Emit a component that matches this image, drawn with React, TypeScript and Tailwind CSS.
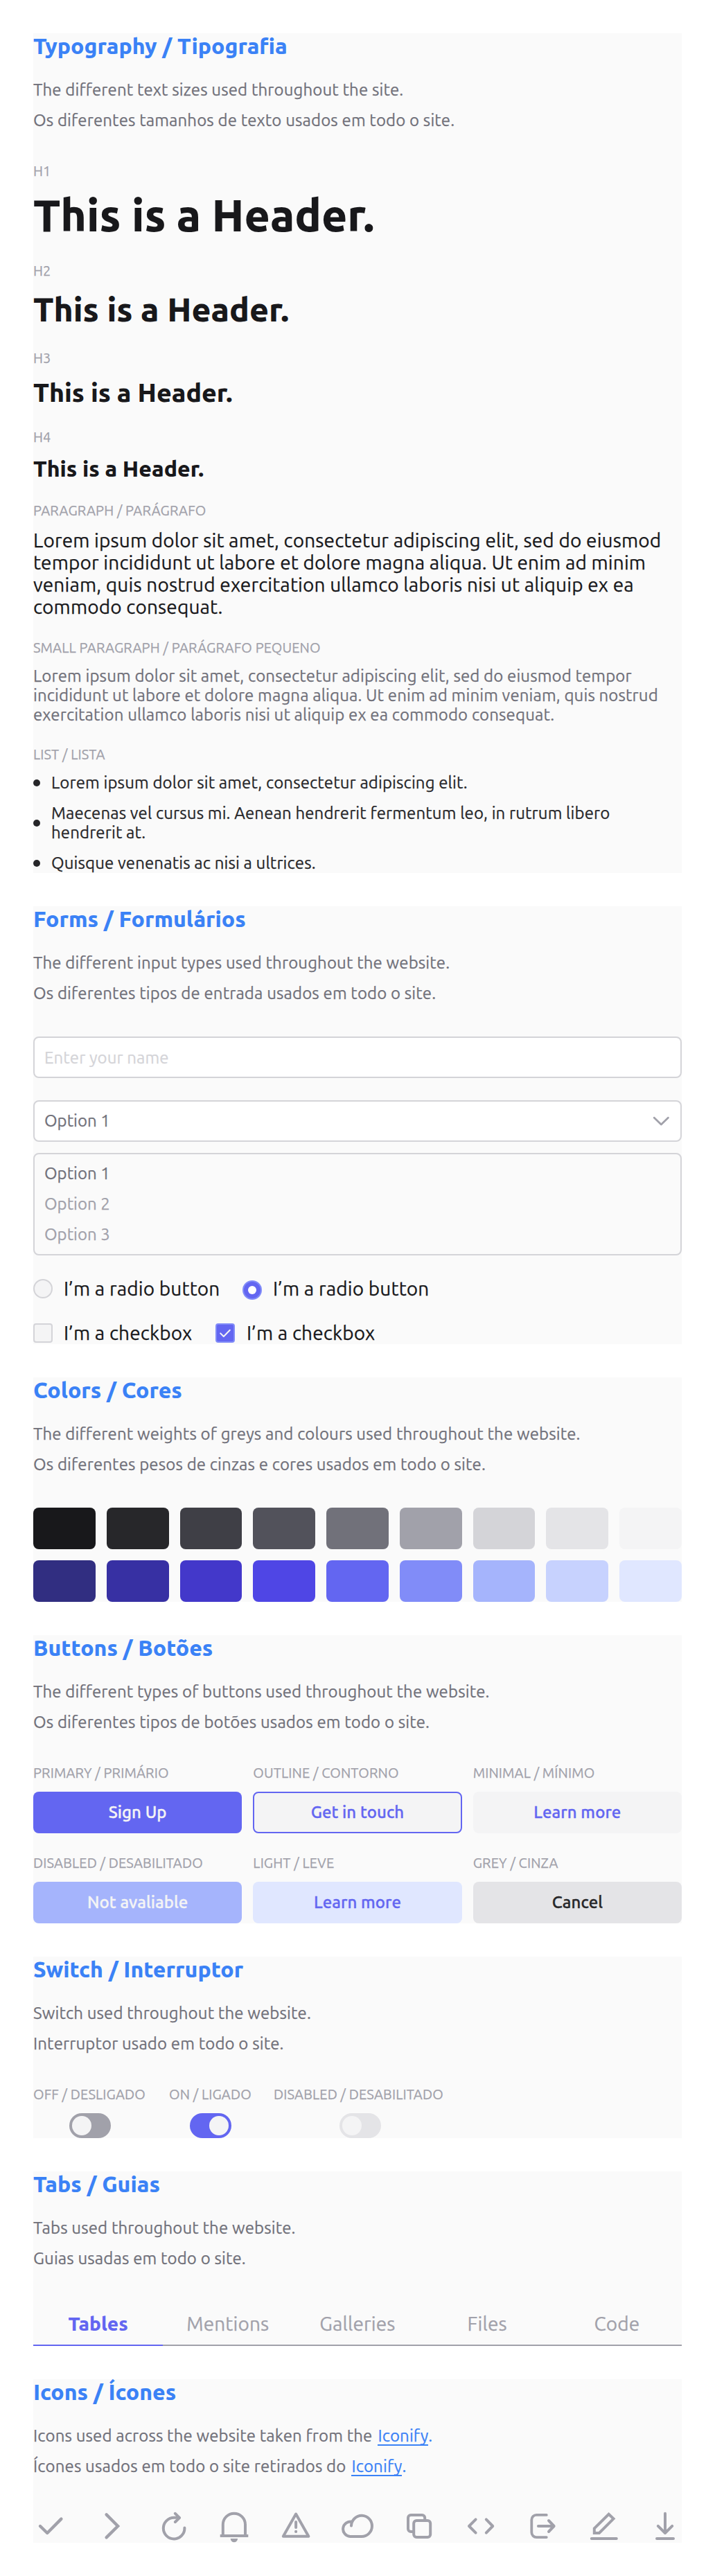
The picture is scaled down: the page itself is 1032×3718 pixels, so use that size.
import type { ReactNode } from "react";

type SectionProps = {
  title: string;
  en: ReactNode;
  pt: ReactNode;
  className: string;
  children: ReactNode;
};

function Section({ title, en, pt, className, children }: SectionProps) {
  return (
    <section className={`flex flex-col bg-[#fafafa] ${className}`}>
      <h2 className="text-[32px] leading-9 font-extrabold tracking-normal text-[#3b82f6] [-webkit-text-stroke:0px]">{title}</h2>
      <div className="mt-8 flex flex-col gap-4 text-2xl leading-7 tracking-[0.0055em] text-[#71717a]">
        <p className="flex">{en}</p>
        <p className="flex">{pt}</p>
      </div>
      {children}
    </section>
  );
}

function Label({ children, className = "" }: { children: ReactNode; className?: string }) {
  return (
    <div className={`text-xl leading-[23px] tracking-[0.006em] whitespace-nowrap text-[#a1a1aa] ${className}`}>{children}</div>
  );
}

function IconifyLink() {
  return (
    <span className="ml-2 flex text-[#3b82f6]">
      <a href="#iconify" className="h-7 border-b-2 border-[#3b82f6] leading-7">
        Iconify
      </a>
      .
    </span>
  );
}

const greys = [
  "bg-[#18181b]",
  "bg-[#27272a]",
  "bg-[#3f3f46]",
  "bg-[#52525b]",
  "bg-[#71717a]",
  "bg-[#a1a1aa]",
  "bg-[#d4d4d8]",
  "bg-[#e4e4e7]",
  "bg-[#f4f4f5]",
];

const indigos = [
  "bg-[#312e81]",
  "bg-[#3730a3]",
  "bg-[#4338ca]",
  "bg-[#4f46e5]",
  "bg-[#6366f1]",
  "bg-[#818cf8]",
  "bg-[#a5b4fc]",
  "bg-[#c7d2fe]",
  "bg-[#e0e7ff]",
];

const buttons = [
  { label: "PRIMARY / PRIMÁRIO", text: "Sign Up", style: "bg-[#6366f1] text-[#f4f4f5]" },
  { label: "OUTLINE / CONTORNO", text: "Get in touch", style: "border-2 border-[#6366f1] bg-[#f4f4f5] text-[#6366f1]" },
  { label: "MINIMAL / MÍNIMO", text: "Learn more", style: "bg-[#f4f4f5] text-[#6366f1]" },
  { label: "DISABLED / DESABILITADO", text: "Not avaliable", style: "bg-[#a5b4fc] text-[#f4f4f5]" },
  { label: "LIGHT / LEVE", text: "Learn more", style: "bg-[#e0e7ff] text-[#6366f1]" },
  { label: "GREY / CINZA", text: "Cancel", style: "bg-[#e4e4e7] text-[#27272a]" },
];

const switches = [
  { label: "OFF / DESLIGADO", width: "w-[164px]", style: "justify-start bg-[#a1a1aa]" },
  { label: "ON / LIGADO", width: "w-[119px]", style: "justify-end bg-[#6366f1]" },
  { label: "DISABLED / DESABILITADO", width: "w-[249px]", style: "justify-start bg-[#e4e4e7]" },
];

const bullets = [
  "Lorem ipsum dolor sit amet, consectetur adipiscing elit.",
  "Maecenas vel cursus mi. Aenean hendrerit fermentum leo, in rutrum libero hendrerit at.",
  "Quisque venenatis ac nisi a ultrices.",
];

const icons: { name: string; art: ReactNode }[] = [
  { name: "check", art: <path d="M10 24L20.2 34L40.4 13.6" strokeWidth="4.4" /> },
  { name: "chevron", art: <path d="M16.6 7.4L33.1 24L16.6 40.4" strokeWidth="4.4" strokeLinejoin="miter" /> },
  {
    name: "refresh",
    art: (
      <>
        <path d="M40.4 26.6A15.3 15.3 0 1 1 25.1 11.8H32.5" />
        <path d="M26.9 5.8L33 12L26.9 18" />
      </>
    ),
  },
  {
    name: "bell",
    art: (
      <>
        <path d="M7.8 38V21.8a16.1 16.1 0 0 1 32.2 0V38" strokeLinecap="butt" />
        <path d="M3.7 38H44.3" strokeLinecap="butt" />
        <path d="M18.7 42H29.1A5.2 5.2 0 0 1 18.7 42Z" fill="currentColor" stroke="none" />
      </>
    ),
  },
  {
    name: "warning",
    art: (
      <>
        <path d="M24.1 6.6L42.4 38.7H5.8Z" />
        <path d="M24.1 18V26" />
        <circle cx="24.1" cy="31.9" r="2.1" fill="currentColor" stroke="none" />
      </>
    ),
  },
  {
    name: "cloud",
    art: <path d="M15 23.4A15 15.1 0 1 1 30 39H13.4A10.8 10.8 0 1 1 16.4 17.7" />,
  },
  {
    name: "copy",
    art: (
      <>
        <rect x="16.2" y="16" width="24" height="24" rx="4" />
        <path d="M32.2 16V12a4 4 0 0 0-4-4H12a4 4 0 0 0-4 4V28a4 4 0 0 0 4 4h4.2" />
      </>
    ),
  },
  {
    name: "code",
    art: (
      <>
        <path d="M16.6 14.4L7 24L16.6 33.6" />
        <path d="M31.8 14.4L41.2 24L31.8 33.6" />
      </>
    ),
  },
  {
    name: "logout",
    art: (
      <>
        <path d="M30.8 7.9H16.3a7 7 0 0 0-7 7V33.1a7 7 0 0 0 7 7H30.8" strokeWidth="3.8" />
        <path d="M18.9 24H40.5" />
        <path d="M34 16L41.6 24L34 32" />
      </>
    ),
  },
  {
    name: "edit",
    art: (
      <>
        <path d="M31.6 6.8L38.5 13.4L17.9 34H10.8V27.3Z" strokeLinejoin="miter" />
        <path d="M6.8 42H42.8" />
      </>
    ),
  },
  {
    name: "download",
    art: (
      <>
        <path d="M24 5.8V33" />
        <path d="M13.8 23.8L24 34L34.2 23.8" />
        <path d="M12 42H36" />
      </>
    ),
  },
];

export default function App() {
  return (
    <main className="flex min-h-[3718px] w-[1032px] flex-col gap-12 bg-white p-12 font-['Ubuntu','Noto_Sans',sans-serif] [-webkit-text-stroke:0.25px]">
      <Section
        title="Typography / Tipografia"
        en="The different text sizes used throughout the site."
        pt="Os diferentes tamanhos de texto usados em todo o site."
        className="h-[1212px]"
      >
        <Label className="mt-[47px]">H1</Label>
        <h1 className="mt-4 text-[64px] leading-[72px] font-extrabold text-[#18181b] [-webkit-text-stroke:0px]">This is a Header.</h1>
        <Label className="mt-[33px]">H2</Label>
        <h2 className="mt-[17px] text-[48px] leading-[54px] font-extrabold text-[#18181b] [-webkit-text-stroke:0px]">This is a Header.</h2>
        <Label className="mt-8">H3</Label>
        <h3 className="mt-[17px] text-[37.4px] leading-[42px] font-extrabold text-[#18181b] [-webkit-text-stroke:0px]">This is a Header.</h3>
        <Label className="mt-8">H4</Label>
        <h4 className="mt-4 text-[32px] leading-9 font-extrabold text-[#18181b] [-webkit-text-stroke:0px]">This is a Header.</h4>
        <Label className="mt-[31px]">PARAGRAPH / PARÁGRAFO</Label>
        <p className="mt-4 text-[28px] leading-8 tracking-[0.005em] text-[#18181b]">
          Lorem ipsum dolor sit amet, consectetur adipiscing elit, sed do eiusmod tempor incididunt ut labore et dolore
          magna aliqua. Ut enim ad minim veniam, quis nostrud exercitation ullamco laboris nisi ut aliquip ex ea commodo
          consequat.
        </p>
        <Label className="mt-[31px]">SMALL PARAGRAPH / PARÁGRAFO PEQUENO</Label>
        <p className="mt-4 text-2xl leading-7 tracking-[0.005em] text-[#71717a]">
          Lorem ipsum dolor sit amet, consectetur adipiscing elit, sed do eiusmod tempor incididunt ut labore et dolore
          magna aliqua. Ut enim ad minim veniam, quis nostrud exercitation ullamco laboris nisi ut aliquip ex ea commodo
          consequat.
        </p>
        <Label className="mt-[31px]">LIST / LISTA</Label>
        <ul className="mt-4 flex flex-col gap-4 text-2xl leading-7 tracking-[0.005em] text-[#27272a]">
          {bullets.map((text) => (
            <li key={text} className="flex items-center gap-4">
              <span className="size-2.5 shrink-0 rounded-full bg-[#27272a]" />
              <span>{text}</span>
            </li>
          ))}
        </ul>
      </Section>

      <Section
        title="Forms / Formulários"
        en="The different input types used throughout the website."
        pt="Os diferentes tipos de entrada usados em todo o site."
        className="h-[632px]"
      >
        <input
          type="text"
          placeholder="Enter your name"
          className="mt-12 h-[60px] w-full rounded-lg border-2 border-[#d4d4d8] bg-white px-3.5 text-2xl leading-7 tracking-[0.004em] text-[#71717a] placeholder:text-[#d4d4d8]"
        />
        <div className="mt-8 flex h-[60px] items-center justify-between rounded-lg border-2 border-[#d4d4d8] bg-white px-3.5 text-2xl leading-7 text-[#71717a]">
          Option 1
          <svg viewBox="0 0 28 28" className="size-7 text-[#a1a1aa]" fill="none" stroke="currentColor" strokeWidth="2.8" strokeLinecap="round" strokeLinejoin="round">
            <path d="M4.2 9.2L14.3 18.9L24.4 9.2" />
          </svg>
        </div>
        <div className="mt-4 flex flex-col gap-4 rounded-lg border-2 border-[#d4d4d8] p-3.5 text-2xl leading-7 text-[#a1a1aa]">
          <span className="text-[#71717a]">Option 1</span>
          <span>Option 2</span>
          <span>Option 3</span>
        </div>
        <div className="mt-8 flex gap-8 text-[28px] leading-8 tracking-[0.0055em] whitespace-nowrap text-[#18181b]">
          <div className="flex w-[270px] gap-4">
            <span className="mt-0.5 size-7 shrink-0 rounded-full border-2 border-[#d4d4d8] bg-[#f4f4f5]" />
            I’m a radio button
          </div>
          <div className="flex gap-4">
            <span className="mt-1 flex size-7 items-center justify-center rounded-full border-2 border-[#818cf8] bg-[#6366f1]">
              <span className="size-3 rounded-full bg-white" />
            </span>
            I’m a radio button
          </div>
        </div>
        <div className="mt-8 flex gap-8 text-[28px] leading-8 tracking-[0.0055em] whitespace-nowrap text-[#18181b]">
          <div className="flex w-[231px] gap-4">
            <span className="mt-0.5 size-7 shrink-0 rounded-sm border-2 border-[#d4d4d8] bg-[#f4f4f5]" />
            I’m a checkbox
          </div>
          <div className="flex gap-[17px]">
            <span className="mt-0.5 flex size-7 items-center justify-center rounded-sm border-2 border-[#818cf8] bg-[#6366f1]">
              <svg viewBox="0 0 24 24" className="size-6" fill="none" stroke="#f4f4f5" strokeWidth="2" strokeLinecap="round" strokeLinejoin="round">
                <path d="M5.2 12.4L9.8 17L18.8 7.7" />
              </svg>
            </span>
            I’m a checkbox
          </div>
        </div>
      </Section>

      <Section
        title="Colors / Cores"
        en="The different weights of greys and colours used throughout the website."
        pt="Os diferentes pesos de cinzas e cores usados em todo o site."
        className="h-[324px]"
      >
        <div className="mt-12 grid grid-cols-9 gap-4">
          {[...greys, ...indigos].map((color) => (
            <div key={color} className={`h-[60px] rounded-lg ${color}`} />
          ))}
        </div>
      </Section>

      <Section
        title="Buttons / Botões"
        en="The different types of buttons used throughout the website."
        pt="Os diferentes tipos de botões usados em todo o site."
        className="h-[416px]"
      >
        <div className="mt-[47px] grid grid-cols-3 gap-x-4 gap-y-[31px]">
          {buttons.map(({ label, text, style }) => (
            <div key={label} className="flex flex-col gap-4">
              <Label>{label}</Label>
              <button
                type="button"
                className={`flex h-[60px] items-center justify-center rounded-lg text-2xl leading-7 font-medium tracking-[0.003em] [-webkit-text-stroke:0.35px] ${style}`}
              >
                {text}
              </button>
            </div>
          ))}
        </div>
      </Section>

      <Section
        title="Switch / Interruptor"
        en="Switch used throughout the website."
        pt="Interruptor usado em todo o site."
        className="h-[262px]"
      >
        <div className="mt-[47px] flex gap-8">
          {switches.map(({ label, width, style }) => (
            <div key={label} className={`flex flex-col gap-4 ${width}`}>
              <Label>{label}</Label>
              <div className={`mx-auto flex h-9 w-[60px] rounded-full p-1 ${style}`}>
                <span className="size-7 rounded-full bg-[#f4f4f5]" />
              </div>
            </div>
          ))}
        </div>
      </Section>

      <Section
        title="Tabs / Guias"
        en="Tabs used throughout the website."
        pt="Guias usadas em todo o site."
        className="h-[252px]"
      >
        <div className="mt-12 grid grid-cols-5 text-center text-[28px] leading-8 tracking-[0.005em] text-[#a1a1aa]">
          <span className="h-16 border-b-2 border-[#6366f1] pt-4 font-extrabold tracking-normal text-[#6366f1] [-webkit-text-stroke:0px]">
            Tables
          </span>
          {["Mentions", "Galleries", "Files", "Code"].map((tab) => (
            <span key={tab} className="h-16 border-b-2 border-[#a1a1aa] pt-4">
              {tab}
            </span>
          ))}
        </div>
      </Section>

      <Section
        title="Icons / Ícones"
        en={
          <>
            Icons used across the website taken from the
            <IconifyLink />
          </>
        }
        pt={
          <>
            Ícones usados em todo o site retirados do
            <IconifyLink />
          </>
        }
        className="h-[236px]"
      >
        <div className="mt-12 flex justify-between text-[#a1a1aa]">
          {icons.map(({ name, art }) => (
            <svg
              key={name}
              viewBox="0 0 48 48"
              className="size-12"
              fill="none"
              stroke="currentColor"
              strokeWidth="4"
              strokeLinecap="round"
              strokeLinejoin="round"
            >
              {art}
            </svg>
          ))}
        </div>
      </Section>
    </main>
  );
}
